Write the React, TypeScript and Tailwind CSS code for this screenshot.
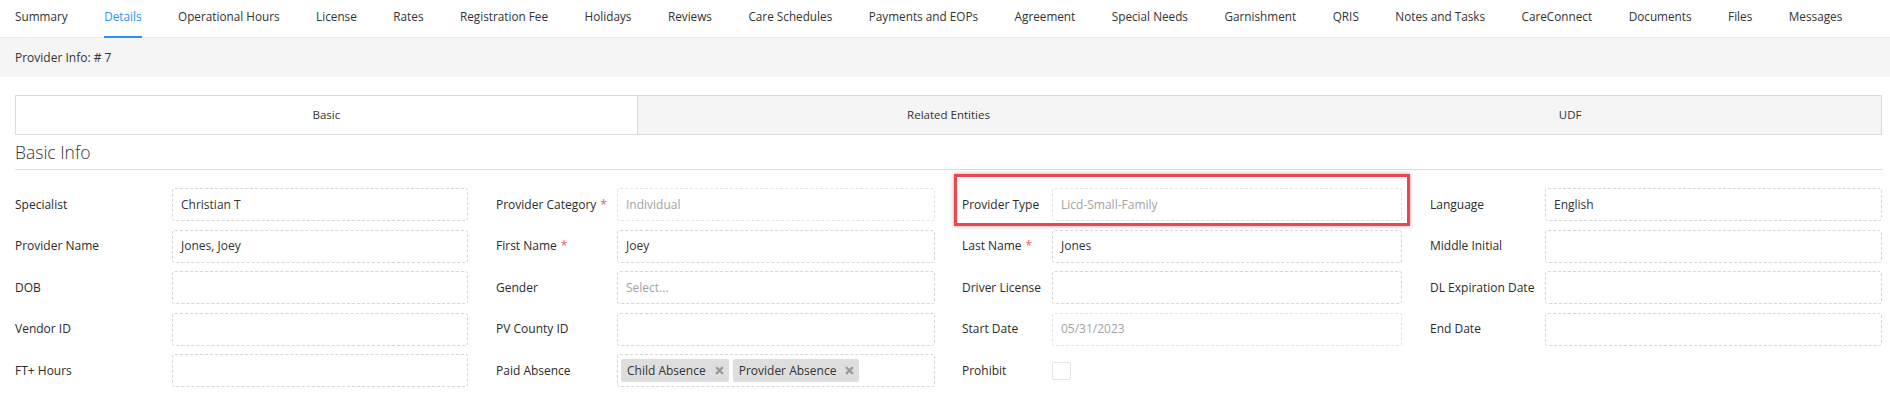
import React from "react";

const navItems = [
  "Summary",
  "Details",
  "Operational Hours",
  "License",
  "Rates",
  "Registration Fee",
  "Holidays",
  "Reviews",
  "Care Schedules",
  "Payments and EOPs",
  "Agreement",
  "Special Needs",
  "Garnishment",
  "QRIS",
  "Notes and Tasks",
  "CareConnect",
  "Documents",
  "Files",
  "Messages",
];

type Field = {
  label: string;
  req?: boolean;
  value?: string;
  kind?: "text" | "disabled" | "placeholder" | "chips" | "checkbox" | "none";
};

const rows: Field[][] = [
  [
    { label: "Specialist", value: "Christian T" },
    { label: "Provider Category", req: true, value: "Individual", kind: "disabled" },
    { label: "Provider Type", value: "Licd-Small-Family", kind: "disabled" },
    { label: "Language", value: "English" },
  ],
  [
    { label: "Provider Name", value: "Jones, Joey" },
    { label: "First Name", req: true, value: "Joey" },
    { label: "Last Name", req: true, value: "Jones" },
    { label: "Middle Initial" },
  ],
  [
    { label: "DOB" },
    { label: "Gender", value: "Select...", kind: "placeholder" },
    { label: "Driver License" },
    { label: "DL Expiration Date" },
  ],
  [
    { label: "Vendor ID" },
    { label: "PV County ID" },
    { label: "Start Date", value: "05/31/2023", kind: "disabled" },
    { label: "End Date" },
  ],
  [
    { label: "FT+ Hours" },
    { label: "Paid Absence", kind: "chips" },
    { label: "Prohibit", kind: "checkbox" },
    { label: "", kind: "none" },
  ],
];

const labelPad = ["pl-0", "pl-[28px]", "pl-[27px]", "pl-[28px]"];

function XIcon() {
  return (
    <svg width="9" height="9" viewBox="0 0 10 10" className="shrink-0">
      <path d="M2 2 L8 8 M8 2 L2 8" stroke="#9a9a9a" strokeWidth="2.6" strokeLinecap="round" />
    </svg>
  );
}

function Chip({ text }: { text: string }) {
  return (
    <div className="flex h-[23px] items-center gap-[9px] rounded-[2px] bg-[#dedede] pl-[6px] pr-[5px] text-[12px] text-[#333]">
      <span>{text}</span>
      <XIcon />
    </div>
  );
}

function Control({ f }: { f: Field }) {
  const kind = f.kind ?? "text";
  if (kind === "none") return <div />;
  if (kind === "checkbox") {
    return (
      <div className="flex h-[33px] items-center">
        <div className="h-[18px] w-[19px] rounded-[2px] border border-[#e3e3e3] bg-white" />
      </div>
    );
  }
  if (kind === "chips") {
    return (
      <div className="flex h-[33px] items-center gap-[4px] rounded-[3px] border border-dashed border-[#d6d6d6] pl-[3px]">
        <Chip text="Child Absence" />
        <Chip text="Provider Absence" />
      </div>
    );
  }
  const disabled = kind === "disabled";
  const color = disabled || kind === "placeholder" ? "text-[#a3a3a3]" : "text-[#333]";
  const border = disabled ? "border-[#e4e4e4]" : "border-[#d6d6d6]";
  return (
    <div
      className={`flex h-[33px] items-center rounded-[3px] border border-dashed ${border} pl-[8px] text-[12px] ${color}`}
    >
      {f.value ?? ""}
    </div>
  );
}

export default function App() {
  return (
    <div className="relative h-[401px] w-full overflow-hidden bg-white font-['Open_Sans','Noto_Sans',sans-serif] text-[#333]">
      {/* top nav */}
      <div className="flex h-[38px] items-stretch gap-[36.5px] border-b border-[#ececec] pl-[15px]">
        {navItems.map((n) => {
          const active = n === "Details";
          return (
            <div
              key={n}
              className={`relative flex items-center whitespace-nowrap pb-[4px] text-[11.75px] ${
                active ? "text-[#2f8ff3]" : "text-[#333]"
              }`}
            >
              {n}
              {active && (
                <div className="absolute bottom-[-1px] left-0 right-0 h-[2px] bg-[#2f8ff3]" />
              )}
            </div>
          );
        })}
      </div>

      {/* provider info band */}
      <div className="flex h-[39px] items-center bg-[#f5f5f5] pl-[15px] text-[12px] text-[#333]">
        Provider Info: # 7
      </div>

      {/* content */}
      <div className="pl-[15px] pr-[8px] pt-[18px]">
        <div className="grid h-[40px] grid-cols-3 border border-[#dcdcdc] text-[11.5px] text-[#333]">
          <div className="flex items-center justify-center border-r border-[#dcdcdc] bg-white">Basic</div>
          <div className="flex items-center justify-center bg-[#f5f5f5]">Related Entities</div>
          <div className="flex items-center justify-center bg-[#f5f5f5]">UDF</div>
        </div>

        <div className="flex h-[35px] items-center border-b border-[#dcdcdc] text-[17.5px] font-light text-[#333]">
          Basic Info
        </div>

        <div className="mt-[18px] grid grid-cols-[157px_296px_149px_318px_117px_350px_143px_337px] gap-y-[8.5px]">
          {rows.map((r, ri) =>
            r.map((f, ci) => (
              <React.Fragment key={`${ri}-${ci}`}>
                <div
                  className={`flex h-[33px] items-center whitespace-nowrap text-[12px] font-medium text-[#2b2b2b] ${labelPad[ci]}`}
                >
                  {f.label}
                  {f.req && <span className="ml-[4px] text-[#e06464]">*</span>}
                </div>
                <Control f={f} />
              </React.Fragment>
            ))
          )}
        </div>
      </div>

      {/* red annotation box */}
      <div className="pointer-events-none absolute left-[954px] top-[174px] h-[52px] w-[456px] border-[3px] border-[#f0464b] shadow-[0_0_4px_rgba(0,0,0,0.35)]" />
    </div>
  );
}
